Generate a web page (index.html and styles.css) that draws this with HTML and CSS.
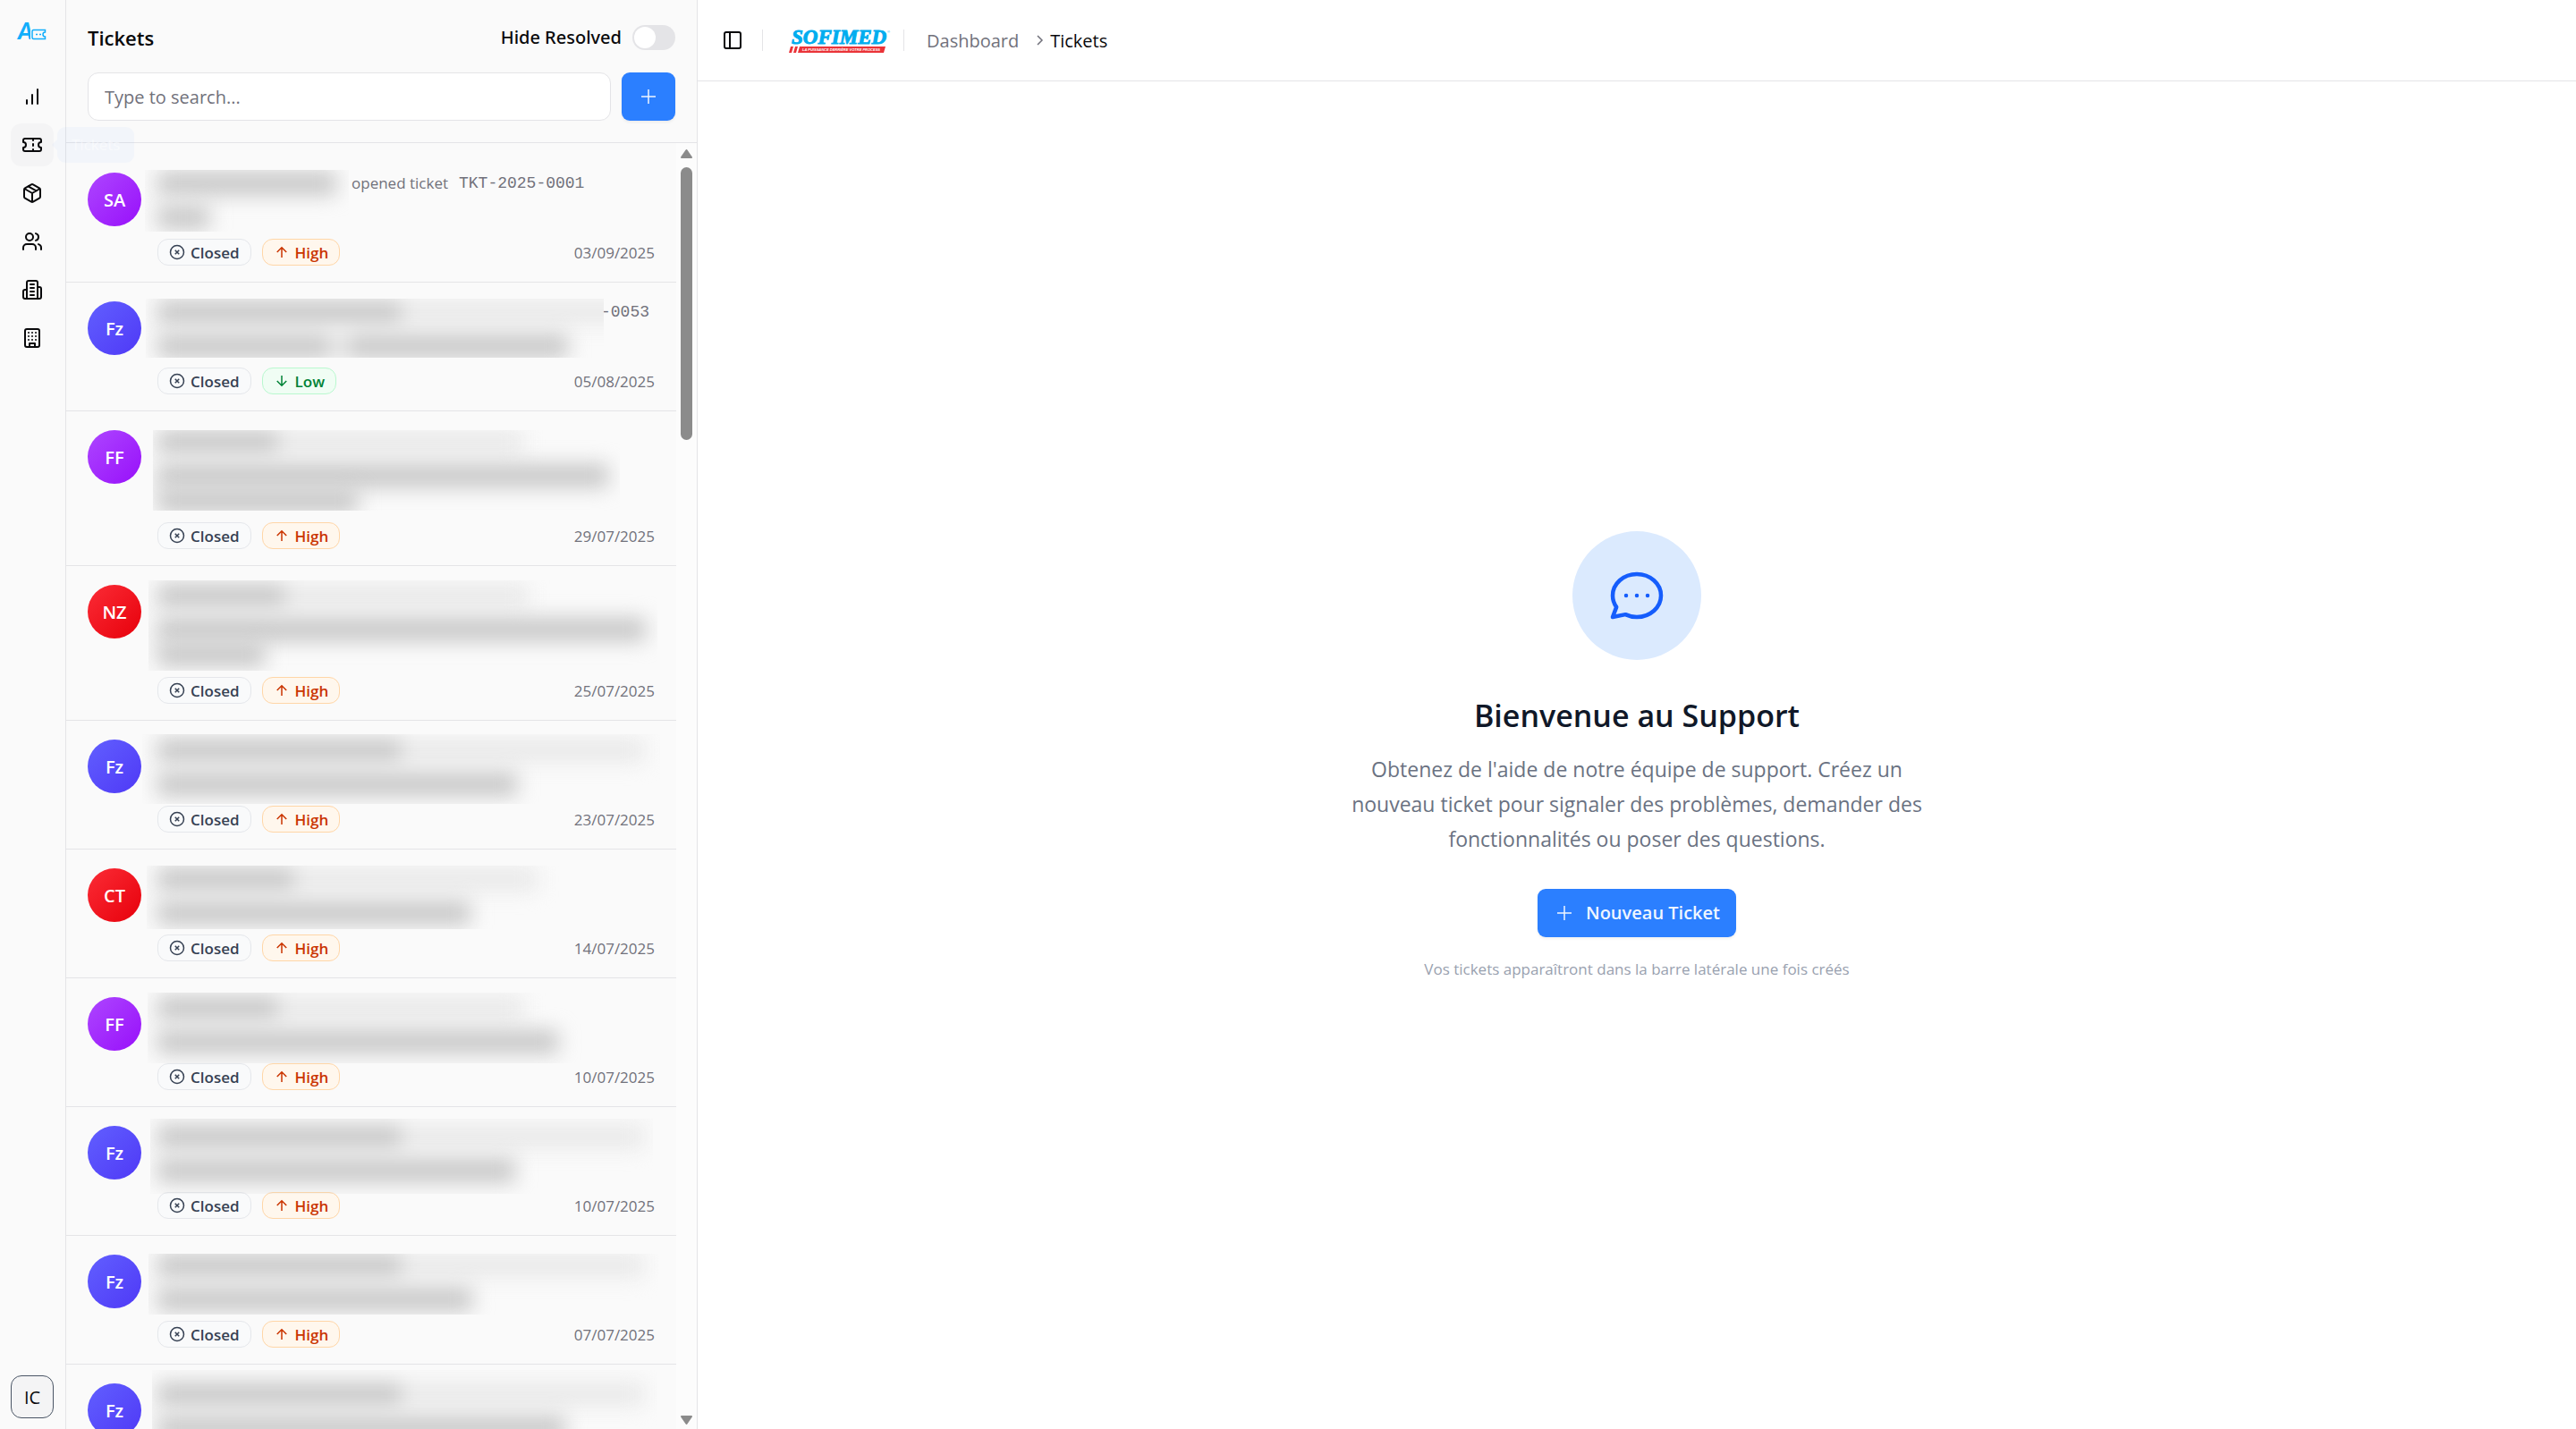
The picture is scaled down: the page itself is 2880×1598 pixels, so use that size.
FILE: index.html
```html
<!DOCTYPE html>
<html lang="fr">
<head>
<meta charset="utf-8">
<title>Tickets</title>
<meta name="viewport" content="width=device-width, initial-scale=1">
<link rel="stylesheet" href="styles.css">
</head>
<body>
<svg class="sprite" aria-hidden="true">
  <symbol id="i-closed" viewBox="0 0 24 24"><circle cx="12" cy="12" r="10"/><path d="m15 9-6 6M9 9l6 6"/></symbol>
  <symbol id="i-up" viewBox="0 0 24 24"><path d="m5 12 7-7 7 7M12 20V5"/></symbol>
  <symbol id="i-down" viewBox="0 0 24 24"><path d="M12 4v15M19 12l-7 7-7-7"/></symbol>
  <symbol id="i-plus" viewBox="0 0 24 24"><path d="M4 12h16M12 4v16"/></symbol>
</svg>
<div class="app">
  <nav class="rail" aria-label="Navigation">
    <a class="brand" href="#" aria-label="Accueil">
      <svg width="36" height="36" viewBox="-2 -8 36 36"><text class="brand-letter" x="0" y="20">A</text><path class="brand-gap" d="M14 7h20v14H14z"/><path class="brand-ticket" d="M17.500 9.500h13v2.500a2.500 2.500 0 0 0 0 5v2.500h-13a1.500 1.500 0 0 1-1.500-1.500v-7a1.500 1.500 0 0 1 1.500-1.500z"/><path class="brand-ticket" d="M20 14.500h2M24 14.500h2"/></svg>
    </a>
    <a class="rail-link" href="#" aria-label="Dashboard"><svg class="icon" viewBox="0 0 24 24"><path d="M12 20V10M18 20V4M6 20v-4"/></svg></a>
    <a class="rail-link active" href="#" aria-label="Tickets" aria-current="page"><svg class="icon" viewBox="0 0 24 24"><path d="M2 9a3 3 0 0 1 0 6v2a2 2 0 0 0 2 2h16a2 2 0 0 0 2-2v-2a3 3 0 0 1 0-6V7a2 2 0 0 0-2-2H4a2 2 0 0 0-2 2ZM13 5v2M13 17v2M13 11v2"/></svg><span class="tooltip">Tickets</span></a>
    <a class="rail-link" href="#" aria-label="Produits"><svg class="icon" viewBox="0 0 24 24"><path d="M11 21.730a2 2 0 0 0 2 0l7-4A2 2 0 0 0 21 16V8a2 2 0 0 0-1-1.730l-7-4a2 2 0 0 0-2 0l-7 4A2 2 0 0 0 3 8v8a2 2 0 0 0 1 1.730zM12 22V12M3.300 7 12 12l8.700-5M7.500 4.270l9 5.150"/></svg></a>
    <a class="rail-link" href="#" aria-label="Utilisateurs"><svg class="icon" viewBox="0 0 24 24"><path d="M16 21v-2a4 4 0 0 0-4-4H6a4 4 0 0 0-4 4v2"/><circle cx="9" cy="7" r="4"/><path d="M22 21v-2a4 4 0 0 0-3-3.870M16 3.130a4 4 0 0 1 0 7.750"/></svg></a>
    <a class="rail-link" href="#" aria-label="Entreprises"><svg class="icon" viewBox="0 0 24 24"><path d="M6 22V4a2 2 0 0 1 2-2h8a2 2 0 0 1 2 2v18ZM6 12H4a2 2 0 0 0-2 2v6a2 2 0 0 0 2 2h2M18 9h2a2 2 0 0 1 2 2v9a2 2 0 0 1-2 2h-2M10 6h4M10 10h4M10 14h4M10 18h4"/></svg></a>
    <a class="rail-link" href="#" aria-label="Services"><svg class="icon" viewBox="0 0 24 24"><rect x="4" y="2" width="16" height="20" rx="2"/><path d="M9 22v-4h6v4M8 6h.010M16 6h.010M12 6h.010M12 10h.010M12 14h.010M16 10h.010M16 14h.010M8 10h.010M8 14h.010"/></svg></a>
    <button class="user" type="button">IC</button>
  </nav>

  <aside class="panel">
    <header class="panel-head">
      <div class="panel-row">
        <h1 class="panel-title">Tickets</h1>
        <label class="toggle-label" for="hide-resolved">Hide Resolved</label>
        <input class="toggle" id="hide-resolved" type="checkbox" role="switch">
      </div>
      <div class="panel-tools">
        <input class="search" type="text" placeholder="Type to search..." aria-label="Type to search">
        <button class="primary square" type="button" aria-label="Nouveau ticket"><svg class="icon thin"><use href="#i-plus"/></svg></button>
      </div>
    </header>
    <div class="scroller">
      <ul class="tickets">
        <li class="ticket">
          <span class="avatar purple">SA</span>
          <div class="body">
            <div class="summary">
              <p class="meta"><span style="width:217px"></span>opened ticket<code class="number">TKT-2025-0001</code></p>
              <div class="veil" aria-hidden="true"><div class="line"><i style="width:200px"></i></div><div class="line"><i style="width:58px"></i></div></div>
            </div>
            <div class="tags"><span class="tag closed"><svg><use href="#i-closed"/></svg>Closed</span><span class="tag high"><svg><use href="#i-up"/></svg>High</span><time>03/09/2025</time></div>
          </div>
        </li>
        <li class="ticket">
          <span class="avatar indigo">Fz</span>
          <div class="body">
            <div class="summary">
              <p class="meta"><span style="width:496px"></span><code>-0053</code></p>
              <div class="veil" aria-hidden="true"><div class="line"><i style="width:272px"></i><i class="soft" style="width:270px"></i></div><div class="line"><i style="width:192px"></i><i class="space"></i><i style="width:245px"></i></div></div>
            </div>
            <div class="tags"><span class="tag closed"><svg><use href="#i-closed"/></svg>Closed</span><span class="tag low"><svg><use href="#i-down"/></svg>Low</span><time>05/08/2025</time></div>
          </div>
        </li>
        <li class="ticket">
          <span class="avatar purple">FF</span>
          <div class="body">
            <div class="summary tall">
              <div class="veil" aria-hidden="true"><div class="line"><i style="width:134px"></i><i class="soft" style="width:275px"></i></div><div class="line"><i style="width:504px"></i></div><div class="line"><i style="width:224px"></i></div></div>
            </div>
            <div class="tags"><span class="tag closed"><svg><use href="#i-closed"/></svg>Closed</span><span class="tag high"><svg><use href="#i-up"/></svg>High</span><time>29/07/2025</time></div>
          </div>
        </li>
        <li class="ticket">
          <span class="avatar red">NZ</span>
          <div class="body">
            <div class="summary tall">
              <div class="veil" aria-hidden="true"><div class="line"><i style="width:142px"></i><i class="soft" style="width:272px"></i></div><div class="line"><i style="width:546px"></i></div><div class="line"><i style="width:120px"></i></div></div>
            </div>
            <div class="tags"><span class="tag closed"><svg><use href="#i-closed"/></svg>Closed</span><span class="tag high"><svg><use href="#i-up"/></svg>High</span><time>25/07/2025</time></div>
          </div>
        </li>
        <li class="ticket">
          <span class="avatar indigo">Fz</span>
          <div class="body">
            <div class="summary">
              <div class="veil" aria-hidden="true"><div class="line"><i style="width:272px"></i><i class="soft" style="width:272px"></i></div><div class="line"><i style="width:402px"></i></div></div>
            </div>
            <div class="tags"><span class="tag closed"><svg><use href="#i-closed"/></svg>Closed</span><span class="tag high"><svg><use href="#i-up"/></svg>High</span><time>23/07/2025</time></div>
          </div>
        </li>
        <li class="ticket">
          <span class="avatar red">CT</span>
          <div class="body">
            <div class="summary">
              <div class="veil" aria-hidden="true"><div class="line"><i style="width:152px"></i><i class="soft" style="width:272px"></i></div><div class="line"><i style="width:350px"></i></div></div>
            </div>
            <div class="tags"><span class="tag closed"><svg><use href="#i-closed"/></svg>Closed</span><span class="tag high"><svg><use href="#i-up"/></svg>High</span><time>14/07/2025</time></div>
          </div>
        </li>
        <li class="ticket">
          <span class="avatar purple">FF</span>
          <div class="body">
            <div class="summary">
              <div class="veil" aria-hidden="true"><div class="line"><i style="width:134px"></i><i class="soft" style="width:275px"></i></div><div class="line"><i style="width:448px"></i></div></div>
            </div>
            <div class="tags"><span class="tag closed"><svg><use href="#i-closed"/></svg>Closed</span><span class="tag high"><svg><use href="#i-up"/></svg>High</span><time>10/07/2025</time></div>
          </div>
        </li>
        <li class="ticket">
          <span class="avatar indigo">Fz</span>
          <div class="body">
            <div class="summary">
              <div class="veil" aria-hidden="true"><div class="line"><i style="width:272px"></i><i class="soft" style="width:272px"></i></div><div class="line"><i style="width:400px"></i></div></div>
            </div>
            <div class="tags"><span class="tag closed"><svg><use href="#i-closed"/></svg>Closed</span><span class="tag high"><svg><use href="#i-up"/></svg>High</span><time>10/07/2025</time></div>
          </div>
        </li>
        <li class="ticket">
          <span class="avatar indigo">Fz</span>
          <div class="body">
            <div class="summary">
              <div class="veil" aria-hidden="true"><div class="line"><i style="width:272px"></i><i class="soft" style="width:272px"></i></div><div class="line"><i style="width:352px"></i></div></div>
            </div>
            <div class="tags"><span class="tag closed"><svg><use href="#i-closed"/></svg>Closed</span><span class="tag high"><svg><use href="#i-up"/></svg>High</span><time>07/07/2025</time></div>
          </div>
        </li>
        <li class="ticket">
          <span class="avatar indigo">Fz</span>
          <div class="body">
            <div class="summary">
              <div class="veil" aria-hidden="true"><div class="line"><i style="width:272px"></i><i class="soft" style="width:272px"></i></div><div class="line"><i style="width:456px"></i></div></div>
            </div>
          </div>
        </li>
      </ul>
      <div class="scrollbar" aria-hidden="true">
        <svg width="15" height="12" viewBox="0 0 15 12"><path d="M7.500 2 13 10H2z"/></svg>
        <div class="thumb"></div>
        <svg width="15" height="12" viewBox="0 0 15 12"><path d="M7.500 10 13 2H2z"/></svg>
      </div>
    </div>
  </aside>

  <main class="main">
    <header class="topbar">
      <button class="ghost" type="button" aria-label="Toggle Sidebar"><svg class="icon" viewBox="0 0 24 24"><rect x="3" y="3" width="18" height="18" rx="2"/><path d="M9 3v18"/></svg></button>
      <span class="divider"></span>
      <svg class="company" width="116" height="40" viewBox="0 -6 116 40" role="img" aria-label="Sofimed">
        <text class="company-name" x="3" y="18">SOFIMED</text>
        <text class="company-mark" x="110" y="6">®</text>
        <path class="company-red" d="M2 21h3l-2 7H0zM7 21h3l-2 7H5zM12 21h2l-1 7h-3zM14 21h94l-2 7H12z"/>
        <text class="company-tag" x="15" y="26">LA PUISSANCE DERRIÈRE VOTRE PROCESS</text>
      </svg>
      <span class="divider"></span>
      <nav class="crumbs" aria-label="Breadcrumb">
        <a href="#">Dashboard</a>
        <svg class="chevron" viewBox="0 0 10 14"><path d="m2 2 5 5-5 5"/></svg>
        <span aria-current="page">Tickets</span>
      </nav>
    </header>
    <section class="welcome">
      <div class="bubble"><svg viewBox="0 0 24 24"><path d="M8 12h.010M12 12h.010M16 12h.010M21 12c0 4.418-4.030 8-9 8a9.863 9.863 0 0 1-4.255-.949L3 20l1.395-3.720C3.512 15.042 3 13.574 3 12c0-4.418 4.030-8 9-8s9 3.582 9 8z"/></svg></div>
      <h2>Bienvenue au Support</h2>
      <p class="lead">Obtenez de l'aide de notre équipe de support. Créez un nouveau ticket pour signaler des problèmes, demander des fonctionnalités ou poser des questions.</p>
      <button class="primary" type="button"><svg class="icon thin"><use href="#i-plus"/></svg>Nouveau Ticket</button>
      <p class="hint">Vos tickets apparaîtront dans la barre latérale une fois créés</p>
    </section>
  </main>
</div>
</body>
</html>
```
FILE: styles.css
```css
* { box-sizing: border-box; }

:root {
  --line: #e4e4e7;
  --muted: #71717b;
  --ink: #09090b;
  --blue: #2b7fff;
  --surface: #fafafa;
}

body {
  margin: 0;
  font-family: "Open Sans", "Noto Sans", sans-serif;
  font-size: 20px;
  color: var(--ink);
  background: #fff;
}

h1, h2, p, ul { margin: 0; padding: 0; }
a { color: inherit; text-decoration: none; }
button, input { font: inherit; }
.sprite { display: none; }

.icon {
  display: block;
  width: 24px;
  height: 24px;
  fill: none;
  stroke: currentColor;
  stroke-width: 2;
  stroke-linecap: round;
  stroke-linejoin: round;
}
.icon.thin { stroke-width: 1.5; stroke-linecap: butt; }

.app { display: flex; height: 100vh; overflow: hidden; }

/* Icon rail */
.rail {
  display: flex;
  flex-direction: column;
  gap: 6px;
  flex: none;
  width: 74px;
  padding: 12px 13px 12px 12px;
  background: var(--surface);
  border-right: 1px solid var(--line);
}
.brand { display: flex; justify-content: center; padding: 4px 0; height: 66px; }
.brand svg { flex: none; }
.brand-letter { font: italic 900 26px "Lato", "Liberation Sans", sans-serif; fill: #12aefb; }
.brand-gap { fill: var(--surface); }
.brand-ticket { fill: none; stroke: #12aefb; stroke-width: 1.5; }
.rail-link {
  position: relative;
  display: flex;
  align-items: center;
  justify-content: center;
  height: 48px;
  border-radius: 12px;
}
.rail-link.active { background: #f4f4f5; }
.tooltip {
  position: absolute;
  left: 52px;
  top: 4px;
  z-index: 2;
  padding: 0 16px;
  border-radius: 9px;
  line-height: 40px;
  font-size: 17px;
  background: rgba(43, 127, 255, 0.04);
  color: rgba(255, 255, 255, 0.5);
}
.tooltip::before {
  content: "";
  position: absolute;
  left: -6px;
  top: 14px;
  border: 6px solid transparent;
  border-left: 0;
  border-right-color: rgba(43, 127, 255, 0.04);
}
.user {
  margin-top: auto;
  height: 48px;
  padding: 0;
  border: 1px solid #4a5565;
  border-radius: 12px;
  background: #f4f4f5;
  color: var(--ink);
}

/* Ticket panel */
.panel {
  display: flex;
  flex-direction: column;
  flex: none;
  width: 706px;
  background: var(--surface);
  border-right: 1px solid var(--line);
}
.panel-head {
  display: flex;
  flex-direction: column;
  gap: 20px;
  padding: 22px 24px 24px;
  border-bottom: 1px solid var(--line);
}
.panel-row { display: flex; align-items: center; gap: 12px; height: 39px; }
.panel-title { margin-right: auto; font-size: 22px; font-weight: 600; }
.toggle-label { font-weight: 500; font-family: "Noto Sans", "Open Sans", sans-serif; }
.toggle {
  appearance: none;
  width: 48px;
  height: 28px;
  margin: 0;
  padding: 2px;
  border-radius: 14px;
  background: var(--line);
}
.toggle::before {
  content: "";
  display: block;
  width: 24px;
  height: 24px;
  border-radius: 50%;
  background: #fff;
}
.toggle:checked { background: var(--blue); }
.toggle:checked::before { margin-left: auto; }
.panel-tools { display: flex; gap: 12px; }
.search {
  flex: 1;
  min-width: 0;
  height: 54px;
  padding: 0 18px;
  border: 1px solid var(--line);
  border-radius: 12px;
  background: #fff;
  color: var(--ink);
}
.search::placeholder { color: var(--muted); opacity: 1; }

.primary {
  display: flex;
  align-items: center;
  justify-content: center;
  gap: 12px;
  height: 54px;
  padding: 0 18px;
  border: 0;
  border-radius: 9px;
  background: var(--blue);
  color: #eff6ff;
  font-weight: 600;
  box-shadow: 0 2px 3px rgba(0, 0, 0, 0.06);
}

.scroller { display: flex; flex: 1; min-height: 0; overflow: hidden; }
.tickets { flex: 1; min-width: 0; padding-top: 12px; list-style: none; }
.scrollbar {
  display: flex;
  flex-direction: column;
  align-items: center;
  flex: none;
  width: 23px;
  padding: 6px 0 4px;
  background: #fcfcfc;
}
.scrollbar svg { fill: #8b8b8b; stroke: #8b8b8b; stroke-width: 2; stroke-linejoin: round; }
.thumb {
  width: 13px;
  height: 305px;
  margin: 9px 0 auto;
  border-radius: 7px;
  background: #8b8b8b;
}

.ticket {
  display: flex;
  gap: 18px;
  padding: 18px 24px;
  border-bottom: 1px solid var(--line);
}
.avatar {
  flex: none;
  width: 60px;
  height: 60px;
  margin-top: 3px;
  border-radius: 50%;
  text-align: center;
  line-height: 62px;
  font-weight: 600;
  color: #fff;
}
.purple { background: linear-gradient(135deg, #ad46ff, #9810fa); }
.indigo { background: linear-gradient(135deg, #615fff, #4f39f6); }
.red { background: linear-gradient(135deg, #fb2c36, #e7000b); }

.body { flex: 1; min-width: 0; }
.summary { position: relative; height: 77px; }
.summary.tall { height: 106px; }
.meta {
  display: flex;
  line-height: 30px;
  font-size: 17px;
  color: var(--muted);
}
.meta code { font-family: "Liberation Mono", monospace; font-size: 18px; }
.meta .number { margin-left: 12px; }

/* Hidden names and subjects: blurred bars clipped to a box */
.veil {
  position: absolute;
  inset: 0 -6px -7px -12px;
  overflow: hidden;
  padding: 2px 0 0 12px;
}
.line { display: flex; height: 26px; margin-bottom: 12px; filter: blur(11px); }
.tall .line + .line { margin-bottom: 2px; }
.line i { flex: none; height: 26px; background: #c7c7c7; }
.line .soft { background: #e9e9e9; }
.line .space { width: 22px; background: #e6e6e6; }

.ticket:nth-child(1) .veil { inset: 0 342px 8px -14px; padding-left: 14px; }
.ticket:nth-child(2) .veil { inset: 0 57px 11px -13px; padding-left: 13px; }
.ticket:nth-child(3) .veil { inset: 3px 39px 13px -5px; padding: 0 0 0 5px; }
.ticket:nth-child(4) .veil { inset: -2px -3px 7px -10px; padding: 4px 0 0 10px; }
.ticket:nth-child(5) .veil { inset: -3px -6px 2px -17px; padding: 5px 0 0 17px; }
.ticket:nth-child(6) .veil { bottom: 6px; }
.ticket:nth-child(7) .veil { inset: -2px 0 0 -11px; padding: 4px 0 0 11px; }
.ticket:nth-child(8) .veil { inset: -5px 2px -2px -8px; padding: 7px 0 0 8px; }
.ticket:nth-child(9) .veil { inset: 2px -4px 7px -10px; padding: 0 0 0 10px; }
.ticket:nth-child(10) .veil { inset: -12px -3px 0 -6px; padding: 14px 0 0 6px; }

.tags { display: flex; align-items: center; gap: 12px; font-size: 17px; }
.tag {
  display: flex;
  align-items: center;
  gap: 6px;
  height: 30px;
  padding: 0 12px;
  border: 1px solid;
  border-radius: 12px;
  font-weight: 600;
}
.tag svg {
  width: 18px;
  height: 18px;
  fill: none;
  stroke: currentColor;
  stroke-width: 2;
}
.closed { background: #f9fafb; border-color: #e5e7eb; color: #364153; }
.high { background: #fff7ed; border-color: #ffd6a7; color: #ca3500; }
.low { background: #f0fdf4; border-color: #b9f8cf; color: #008236; }
.tags time { margin-left: auto; color: var(--muted); }

/* Main area */
.main { display: flex; flex-direction: column; flex: 1; min-width: 0; }
.topbar {
  display: flex;
  align-items: center;
  flex: none;
  height: 91px;
  padding: 0 27px;
  border-bottom: 1px solid var(--line);
}
.ghost { padding: 0; border: 0; background: none; color: var(--ink); }
.divider { width: 1px; height: 24px; margin: 0 21px; background: var(--line); }
.company { margin: 0 -9px 0 8px; }
.company-name { font: italic 700 23px "Liberation Serif", serif; fill: #00adef; stroke: #00adef; }
.company-mark { font: 4px "Liberation Sans", sans-serif; fill: #00adef; }
.company-red { fill: #ea3338; }
.company-tag { font: italic 700 4px "Liberation Sans", sans-serif; fill: #fff; }
.crumbs { display: flex; align-items: center; }
.crumbs a { margin: 0 19px 0 4px; color: var(--muted); }
.chevron {
  width: 10px;
  height: 14px;
  margin-right: 6px;
  fill: none;
  stroke: var(--muted);
  stroke-width: 1.5;
}

.welcome {
  display: flex;
  flex-direction: column;
  align-items: center;
  justify-content: center;
  flex: 1;
  text-align: center;
}
.bubble {
  display: flex;
  align-items: center;
  justify-content: center;
  width: 144px;
  height: 144px;
  margin-bottom: 36px;
  border-radius: 50%;
  background: #dbeafe;
}
.bubble svg {
  width: 72px;
  height: 72px;
  fill: none;
  stroke: #155dfc;
  stroke-width: 1.5;
  stroke-linecap: round;
  stroke-linejoin: round;
}
.welcome h2 {
  margin-bottom: 15px;
  line-height: 52px;
  font-size: 34px;
  font-weight: 600;
  color: #101828;
}
.lead {
  max-width: 672px;
  margin-bottom: 36px;
  line-height: 39px;
  font-size: 23px;
  color: #6a7282;
}
.hint {
  margin-top: 24px;
  line-height: 24px;
  font-size: 17px;
  color: #99a1af;
}
```
